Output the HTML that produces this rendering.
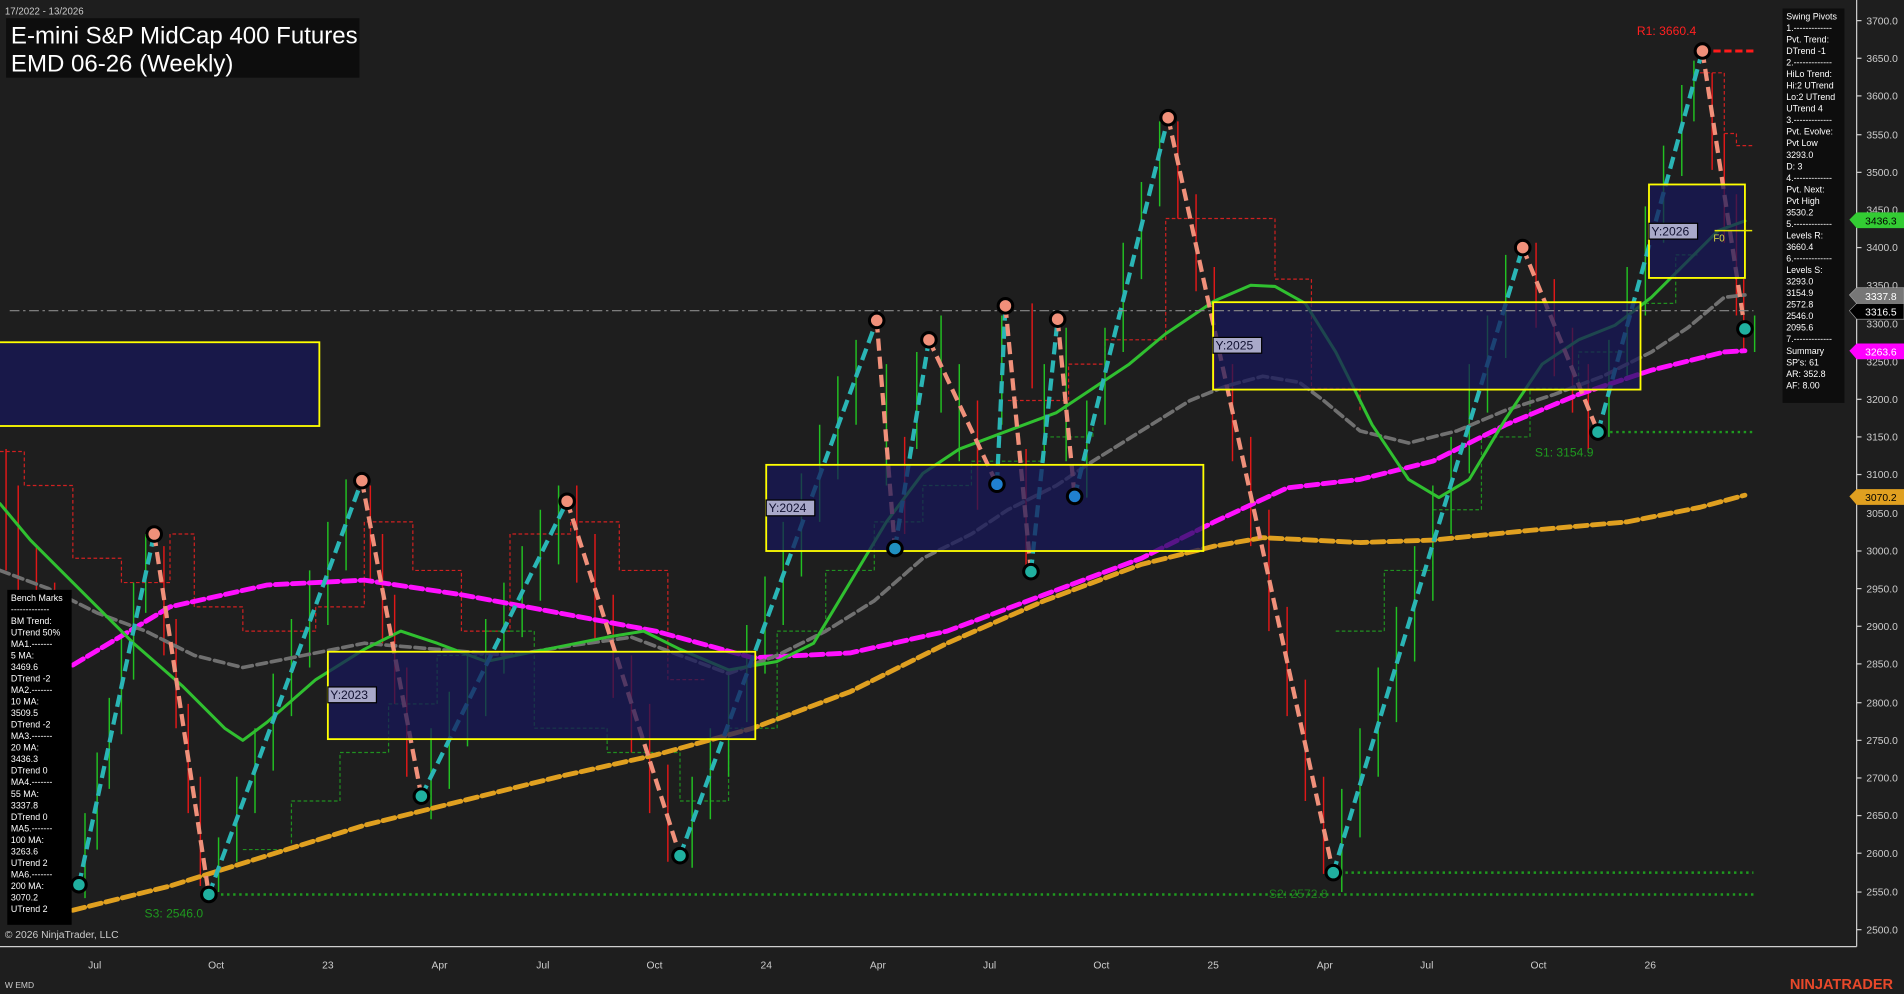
<!DOCTYPE html>
<html><head><meta charset="utf-8"><style>
html,body{margin:0;padding:0;background:#1e1e1e;overflow:hidden}
svg{display:block}
text{font-family:"Liberation Sans",sans-serif}
</style></head><body>
<svg width="1904" height="994" viewBox="0 0 1568 819" preserveAspectRatio="none" xmlns="http://www.w3.org/2000/svg">
<rect width="1568" height="819" fill="#1e1e1e"/>
<!-- step lines -->
<g fill="none" stroke-width="1" stroke-dasharray="3,2">
<polyline stroke="#d02020" points="0,372 20,372 20,400 60,400 60,460 100,460 100,480 140,480 140,440 160,440 160,500 200,500 200,520 260,520 260,500 300,500 300,430 340,430 340,470 380,470 380,520 420,520 420,440 470,440 470,430 510,430 510,470 550,470 550,560 580,560"/>
<polyline stroke="#d02020" points="830,330 880,330 880,300 910,300 910,280 960,280 960,180 1050,180 1050,230 1080,230 1080,320 1120,320 1120,340"/>
<polyline stroke="#d02020" points="1400,60 1420,60 1420,110 1430,110 1430,120 1444,120"/>
<polyline stroke="#209020" points="200,700 240,700 240,660 280,660 280,620 320,620 320,580 360,580 360,540 400,540 400,520 440,520 440,600 500,600 500,620 560,620 560,660 600,660 600,600 640,600 640,520 680,520 680,470 720,470 720,430 760,430 760,400 800,400 800,380 860,380 860,360 900,360 900,340"/>
<polyline stroke="#209020" points="1100,520 1140,520 1140,470 1180,470 1180,420 1220,420 1220,360 1260,360 1260,320 1300,320 1300,290 1340,290 1340,250 1380,250 1380,210 1400,210"/>
</g>
<!-- candles -->
<path fill="none" stroke="#22c022" stroke-width="1.2" d="M70 670V740M80 620V700M90 575V650M100 520V605M110 480V560M120 440V505M180 690V735M195 640V710M210 600V670M225 555V635M240 510V590M255 470V550M270 430V515M285 395V470M355 600V675M370 570V650M385 540V615M400 510V590M415 480V555M430 450V525M445 420V495M460 400V465M570 640V715M585 600V675M600 555V640M615 515V595M630 475V555M645 430V515M660 390V475M675 350V430M690 310V395M705 280V350M730 300V400M755 290V370M775 260V340M790 300V380M825 260V350M860 300V380M878 270V380M895 330V410M910 270V350M925 200V290M940 150V230M955 100V170M1105 650V735M1120 600V690M1135 550V640M1150 500V595M1165 450V545M1180 400V495M1195 360V440M1210 300V390M1225 260V340M1240 210V295M1325 280V360M1340 220V310M1355 170V260M1370 120V200M1385 70V145M1395 50V100M1445 260V290"/>
<path fill="none" stroke="#e01818" stroke-width="1.2" d="M5 370V470M15 400V500M30 450V540M45 480V600M135 450V540M145 510V600M155 580V670M165 640V730M305 400V480M315 440V530M325 490V580M335 550V640M475 400V480M490 440V530M505 490V575M520 540V620M535 580V670M550 630V710M745 360V440M805 330V420M845 370V470M850 250V320M970 100V180M985 160V240M1000 220V320M1015 300V380M1030 360V450M1045 420V520M1060 500V590M1075 560V660M1090 640V720M1265 200V270M1280 230V310M1295 270V340M1308 300V370M1410 60V140M1420 110V200M1430 160V260M1436 230V290"/>
<!-- MAs -->
<g fill="none" stroke-linejoin="round" stroke-linecap="round">
<polyline stroke="#e0a020" stroke-width="4" stroke-dasharray="10,4" points="60,750 140,730 220,705 300,680 380,660 460,640 540,622 620,600 700,570 780,530 860,495 940,465 1000,450 1040,443 1080,445 1120,447 1180,445 1260,437 1340,430 1400,418 1437,408"/>
<polyline stroke="#ff10ff" stroke-width="4" stroke-dasharray="10,4" points="60,548 140,500 220,482 300,478 380,490 460,505 540,520 620,542 700,538 780,520 860,490 940,460 1000,430 1060,402 1120,395 1180,380 1240,350 1300,325 1360,305 1420,290 1437,289"/>
<polyline stroke="#707070" stroke-width="3" stroke-dasharray="8,4" points="0,470 40,485 80,505 120,520 160,540 200,550 250,540 300,530 360,535 420,540 470,532 520,525 560,540 600,555 640,540 680,520 720,495 760,460 800,440 830,420 870,400 900,380 940,355 980,330 1010,318 1040,310 1070,315 1090,330 1120,355 1160,365 1200,355 1240,338 1280,325 1320,310 1360,290 1390,270 1420,245 1437,243"/>
<polyline stroke="#30c030" stroke-width="2.5" points="0,415 25,445 50,470 80,500 110,530 150,565 185,600 200,610 220,595 260,560 300,535 330,520 360,530 400,545 450,535 500,525 530,520 560,535 600,552 640,545 670,530 700,480 730,430 760,390 790,370 830,355 870,340 900,320 930,300 960,275 1000,248 1030,235 1050,236 1075,250 1100,290 1130,350 1160,395 1185,410 1210,395 1240,345 1270,300 1300,280 1330,268 1360,245 1390,215 1415,190 1437,182"/>
</g>
<!-- zigzag -->
<g fill="none" stroke-width="3.5" stroke-dasharray="10,5">
<polyline stroke="#2ab5b5" points="65,729 127,440"/>
<polyline stroke="#f0907a" points="127,440 172,737"/>
<polyline stroke="#2ab5b5" points="172,737 298,396"/>
<polyline stroke="#f0907a" points="298,396 347,656"/>
<polyline stroke="#2ab5b5" points="347,656 467,413"/>
<polyline stroke="#f0907a" points="467,413 560,705"/>
<polyline stroke="#2ab5b5" points="560,705 722,264"/>
<polyline stroke="#f0907a" points="722,264 737,452"/>
<polyline stroke="#2ab5b5" points="737,452 765,280"/>
<polyline stroke="#f0907a" points="765,280 821,399"/>
<polyline stroke="#2ab5b5" points="821,399 828,252"/>
<polyline stroke="#f0907a" points="828,252 849,471"/>
<polyline stroke="#2ab5b5" points="849,471 871,263"/>
<polyline stroke="#f0907a" points="871,263 885,409"/>
<polyline stroke="#2ab5b5" points="885,409 962,97"/>
<polyline stroke="#f0907a" points="962,97 1098,719"/>
<polyline stroke="#2ab5b5" points="1098,719 1254,204"/>
<polyline stroke="#f0907a" points="1254,204 1316,356"/>
<polyline stroke="#2ab5b5" points="1316,356 1402,42"/>
<polyline stroke="#f0907a" points="1402,42 1437,271"/>
</g>
<!-- boxes (semi-transparent over lines) -->
<g fill="#16165a" fill-opacity="0.72" stroke="#ffff00" stroke-width="1.5">
<rect x="-2" y="282" width="265" height="69"/>
<rect x="270" y="537" width="352" height="72"/>
<rect x="631" y="383" width="360" height="71"/>
<rect x="999" y="249" width="352" height="72"/>
<rect x="1358" y="152" width="79" height="77"/>
</g>
<line x1="1412" y1="190" x2="1443" y2="190" stroke="#e6e600" stroke-width="1.2"/>
<text x="1411" y="199" font-size="8" fill="#d8d840">F0</text>
<line x1="8" y1="256" x2="1444" y2="256" stroke="#8a8a8a" stroke-width="1" stroke-dasharray="8,3,2,3"/>
<g stroke="#1f9a1f" stroke-width="2" stroke-dasharray="2,3">
<line x1="1316" y1="356" x2="1444" y2="356"/>
<line x1="1098" y1="719" x2="1444" y2="719"/>
<line x1="172" y1="737" x2="1444" y2="737"/>
</g>
<line x1="1402" y1="42" x2="1447" y2="42" stroke="#ff1a1a" stroke-width="2.5" stroke-dasharray="6,3"/>
<!-- pivots -->
<g stroke="#000" stroke-width="2.5">
<circle cx="65" cy="729" r="6" fill="#20b0a0"/>
<circle cx="127" cy="440" r="6" fill="#f0907a"/>
<circle cx="172" cy="737" r="6" fill="#20b0a0"/>
<circle cx="298" cy="396" r="6" fill="#f0907a"/>
<circle cx="347" cy="656" r="6" fill="#20b0a0"/>
<circle cx="467" cy="413" r="6" fill="#f0907a"/>
<circle cx="560" cy="705" r="6" fill="#20b0a0"/>
<circle cx="722" cy="264" r="6" fill="#f0907a"/>
<circle cx="737" cy="452" r="6" fill="#2090c0"/>
<circle cx="765" cy="280" r="6" fill="#f0907a"/>
<circle cx="821" cy="399" r="6" fill="#2080d0"/>
<circle cx="828" cy="252" r="6" fill="#f0907a"/>
<circle cx="849" cy="471" r="6" fill="#20b0a0"/>
<circle cx="871" cy="263" r="6" fill="#f0907a"/>
<circle cx="885" cy="409" r="6" fill="#2080d0"/>
<circle cx="962" cy="97" r="6" fill="#f0907a"/>
<circle cx="1098" cy="719" r="6" fill="#20b0a0"/>
<circle cx="1254" cy="204" r="6" fill="#f0907a"/>
<circle cx="1316" cy="356" r="6" fill="#20b0a0"/>
<circle cx="1402" cy="42" r="6" fill="#f0907a"/>
<circle cx="1437" cy="271" r="6" fill="#20b0a0"/>
</g>
<g font-family="Liberation Mono,monospace" font-size="10" fill="#101030">
<rect x="270" y="566" width="40" height="13" fill="#a9a9c9" stroke="#000"/><text x="272" y="576">Y:2023</text>
<rect x="631" y="412" width="40" height="13" fill="#a9a9c9" stroke="#000"/><text x="633" y="422">Y:2024</text>
<rect x="999" y="278" width="40" height="13" fill="#a9a9c9" stroke="#000"/><text x="1001" y="288">Y:2025</text>
<rect x="1358" y="184" width="40" height="13" fill="#a9a9c9" stroke="#000"/><text x="1360" y="194">Y:2026</text>
</g>
<text x="1348" y="29" font-size="10" fill="#ff2020">R1: 3660.4</text>
<text x="1264" y="376" font-size="10" fill="#1f9a1f">S1: 3154.9</text>
<text x="1045" y="740" font-size="10" fill="#1f7a1f">S2: 2572.8</text>
<text x="119" y="756" font-size="10" fill="#1f9a1f">S3: 2546.0</text>
<text x="4" y="12" font-size="8" fill="#cccccc">17/2022 - 13/2026</text>
<rect x="5" y="15" width="291" height="49" fill="#0d0d0d"/>
<text x="9" y="36" font-size="19.8" fill="#ffffff">E-mini S&amp;P MidCap 400 Futures</text>
<text x="9" y="59" font-size="19.8" fill="#ffffff">EMD 06-26 (Weekly)</text>
<line x1="1529" y1="0" x2="1529" y2="780" stroke="#cfcfcf" stroke-width="1"/>
<line x1="0" y1="780" x2="1529" y2="780" stroke="#cfcfcf" stroke-width="1"/>
<g font-size="8.5" fill="#cccccc">
<text x="1537" y="20">3700.0</text><text x="1537" y="51">3650.0</text><text x="1537" y="82">3600.0</text><text x="1537" y="114">3550.0</text><text x="1537" y="145">3500.0</text><text x="1537" y="176">3450.0</text><text x="1537" y="207">3400.0</text><text x="1537" y="238">3350.0</text><text x="1537" y="270">3300.0</text><text x="1537" y="301">3250.0</text><text x="1537" y="332">3200.0</text><text x="1537" y="363">3150.0</text><text x="1537" y="394">3100.0</text><text x="1537" y="426">3050.0</text><text x="1537" y="457">3000.0</text><text x="1537" y="488">2950.0</text><text x="1537" y="519">2900.0</text><text x="1537" y="550">2850.0</text><text x="1537" y="582">2800.0</text><text x="1537" y="613">2750.0</text><text x="1537" y="644">2700.0</text><text x="1537" y="675">2650.0</text><text x="1537" y="706">2600.0</text><text x="1537" y="738">2550.0</text><text x="1537" y="769">2500.0</text>
</g>
<g stroke="#cfcfcf"><line x1="1529" y1="17" x2="1533" y2="17"/><line x1="1529" y1="48" x2="1533" y2="48"/><line x1="1529" y1="79" x2="1533" y2="79"/><line x1="1529" y1="111" x2="1533" y2="111"/><line x1="1529" y1="142" x2="1533" y2="142"/><line x1="1529" y1="204" x2="1533" y2="204"/><line x1="1529" y1="329" x2="1533" y2="329"/><line x1="1529" y1="360" x2="1533" y2="360"/><line x1="1529" y1="391" x2="1533" y2="391"/><line x1="1529" y1="454" x2="1533" y2="454"/><line x1="1529" y1="485" x2="1533" y2="485"/><line x1="1529" y1="516" x2="1533" y2="516"/><line x1="1529" y1="547" x2="1533" y2="547"/><line x1="1529" y1="579" x2="1533" y2="579"/><line x1="1529" y1="610" x2="1533" y2="610"/><line x1="1529" y1="641" x2="1533" y2="641"/><line x1="1529" y1="672" x2="1533" y2="672"/><line x1="1529" y1="703" x2="1533" y2="703"/><line x1="1529" y1="735" x2="1533" y2="735"/><line x1="1529" y1="766" x2="1533" y2="766"/></g>
<g font-size="8.5">
<path d="M1523,181 L1529,175 L1568,175 L1568,188 L1529,188 Z" fill="#33cc33"/><text x="1536" y="185" fill="#000">3436.3</text>
<path d="M1523,243 L1529,237 L1568,237 L1568,250 L1529,250 Z" fill="#777" stroke="#aaa" stroke-width=".5"/><text x="1536" y="247" fill="#fff">3337.8</text>
<path d="M1523,256 L1529,250 L1568,250 L1568,263 L1529,263 Z" fill="#000" stroke="#aaa" stroke-width=".5"/><text x="1536" y="260" fill="#fff">3316.5</text>
<path d="M1523,289 L1529,283 L1568,283 L1568,296 L1529,296 Z" fill="#ff00ff"/><text x="1536" y="293" fill="#fff">3263.6</text>
<path d="M1523,409 L1529,403 L1568,403 L1568,416 L1529,416 Z" fill="#e0a020"/><text x="1536" y="413" fill="#000">3070.2</text>
</g>
<g font-size="8.5" fill="#cccccc" text-anchor="middle">
<text x="78" y="798">Jul</text><text x="178" y="798">Oct</text><text x="270" y="798">23</text><text x="362" y="798">Apr</text><text x="447" y="798">Jul</text><text x="539" y="798">Oct</text><text x="631" y="798">24</text><text x="723" y="798">Apr</text><text x="815" y="798">Jul</text><text x="907" y="798">Oct</text><text x="999" y="798">25</text><text x="1091" y="798">Apr</text><text x="1175" y="798">Jul</text><text x="1267" y="798">Oct</text><text x="1359" y="798">26</text>
</g>
<text x="4" y="773" font-size="8.5" fill="#cccccc">© 2026 NinjaTrader, LLC</text>
<text x="4" y="814" font-size="7" fill="#cccccc">W EMD</text>
<text x="1474" y="815" font-size="12" font-weight="bold" fill="#e8482a">NINJATRADER</text>
<rect x="1468" y="7" width="51" height="325" fill="#0d0d0d"/>
<g font-size="7.3" fill="#ffffff">
<text x="1471" y="16">Swing Pivots</text><text x="1471" y="25.5">1.-------------</text><text x="1471" y="35">Pvt. Trend:</text><text x="1471" y="44.5">DTrend -1</text><text x="1471" y="54">2.-------------</text><text x="1471" y="63.5">HiLo Trend:</text><text x="1471" y="73">Hi:2 UTrend</text><text x="1471" y="82.5">Lo:2 UTrend</text><text x="1471" y="92">UTrend 4</text><text x="1471" y="101.5">3.-------------</text><text x="1471" y="111">Pvt. Evolve:</text><text x="1471" y="120.5">Pvt Low</text><text x="1471" y="130">3293.0</text><text x="1471" y="139.5">D: 3</text><text x="1471" y="149">4.-------------</text><text x="1471" y="158.5">Pvt. Next:</text><text x="1471" y="168">Pvt High</text><text x="1471" y="177.5">3530.2</text><text x="1471" y="187">5.-------------</text><text x="1471" y="196.5">Levels R:</text><text x="1471" y="206">3660.4</text><text x="1471" y="215.5">6.-------------</text><text x="1471" y="225">Levels S:</text><text x="1471" y="234.5">3293.0</text><text x="1471" y="244">3154.9</text><text x="1471" y="253.5">2572.8</text><text x="1471" y="263">2546.0</text><text x="1471" y="272.5">2095.6</text><text x="1471" y="282">7.-------------</text><text x="1471" y="291.5">Summary</text><text x="1471" y="301">SP's: 61</text><text x="1471" y="310.5">AR: 352.8</text><text x="1471" y="320">AF: 8.00</text>
</g>
<rect x="6" y="486" width="53" height="276" fill="#000"/>
<g font-size="7.3" fill="#ffffff">
<text x="9" y="495">Bench Marks</text><text x="9" y="504.5">-------------</text><text x="9" y="514">BM Trend:</text><text x="9" y="523.5">UTrend 50%</text><text x="9" y="533">MA1.-------</text><text x="9" y="542.5">5 MA:</text><text x="9" y="552">3469.6</text><text x="9" y="561.5">DTrend -2</text><text x="9" y="571">MA2.-------</text><text x="9" y="580.5">10 MA:</text><text x="9" y="590">3509.5</text><text x="9" y="599.5">DTrend -2</text><text x="9" y="609">MA3.-------</text><text x="9" y="618.5">20 MA:</text><text x="9" y="628">3436.3</text><text x="9" y="637.5">DTrend 0</text><text x="9" y="647">MA4.-------</text><text x="9" y="656.5">55 MA:</text><text x="9" y="666">3337.8</text><text x="9" y="675.5">DTrend 0</text><text x="9" y="685">MA5.-------</text><text x="9" y="694.5">100 MA:</text><text x="9" y="704">3263.6</text><text x="9" y="713.5">UTrend 2</text><text x="9" y="723">MA6.-------</text><text x="9" y="732.5">200 MA:</text><text x="9" y="742">3070.2</text><text x="9" y="751.5">UTrend 2</text>
</g>
</svg>
</body></html>
